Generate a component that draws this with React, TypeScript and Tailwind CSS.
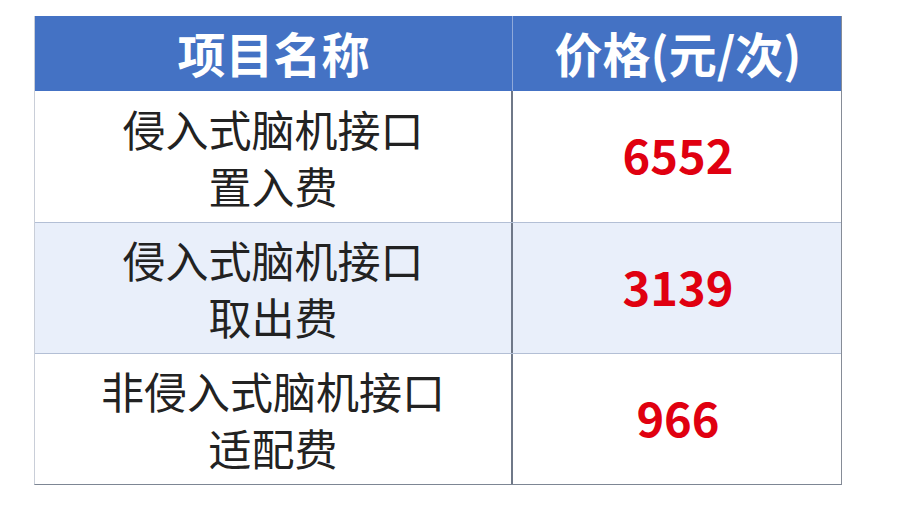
import React from "react";

const rows = [
  { name: ["侵入式脑机接口", "置入费"], price: "6552", shaded: false },
  { name: ["侵入式脑机接口", "取出费"], price: "3139", shaded: true },
  { name: ["非侵入式脑机接口", "适配费"], price: "966", shaded: false },
];

export default function App() {
  return (
    <div
      className="w-[909px] h-[508px] bg-white pt-[16px] pl-[34px]"
      style={{ fontFamily: '"Noto Sans CJK SC", "Noto Sans", sans-serif' }}
    >
      <div className="w-[808px] border-l border-l-[#c9ced8] border-r border-r-[#868c97] border-b border-b-[#7d8694]">
        {/* Header */}
        <div className="grid grid-cols-[478px_330px] h-[75px] bg-[#4472c4] text-white font-bold text-[48px]">
          <div className="flex items-center justify-center border-r border-r-[#8fa9da] leading-none pb-[4px]">
            项目名称
          </div>
          <div className="flex items-center justify-center leading-none pb-[4px]">
            价格(元/次)
          </div>
        </div>

        {rows.map((row, i) => (
          <div
            key={i}
            className={`grid grid-cols-[478px_330px] h-[131px] ${
              row.shaded ? "bg-[#e9effa]" : "bg-white"
            } ${i > 0 ? "border-t border-t-[#b3bfd5]" : ""}`}
          >
            <div className="flex flex-col items-center justify-center border-r-2 border-r-[#6f7888] text-[#222222] text-[43px] leading-[57px]">
              {row.name.map((line, j) => (
                <div key={j}>{line}</div>
              ))}
            </div>
            <div className="flex items-center justify-center text-[#e00010] font-bold text-[47px] leading-none pb-[6px]">
              {row.price}
            </div>
          </div>
        ))}
      </div>
    </div>
  );
}
